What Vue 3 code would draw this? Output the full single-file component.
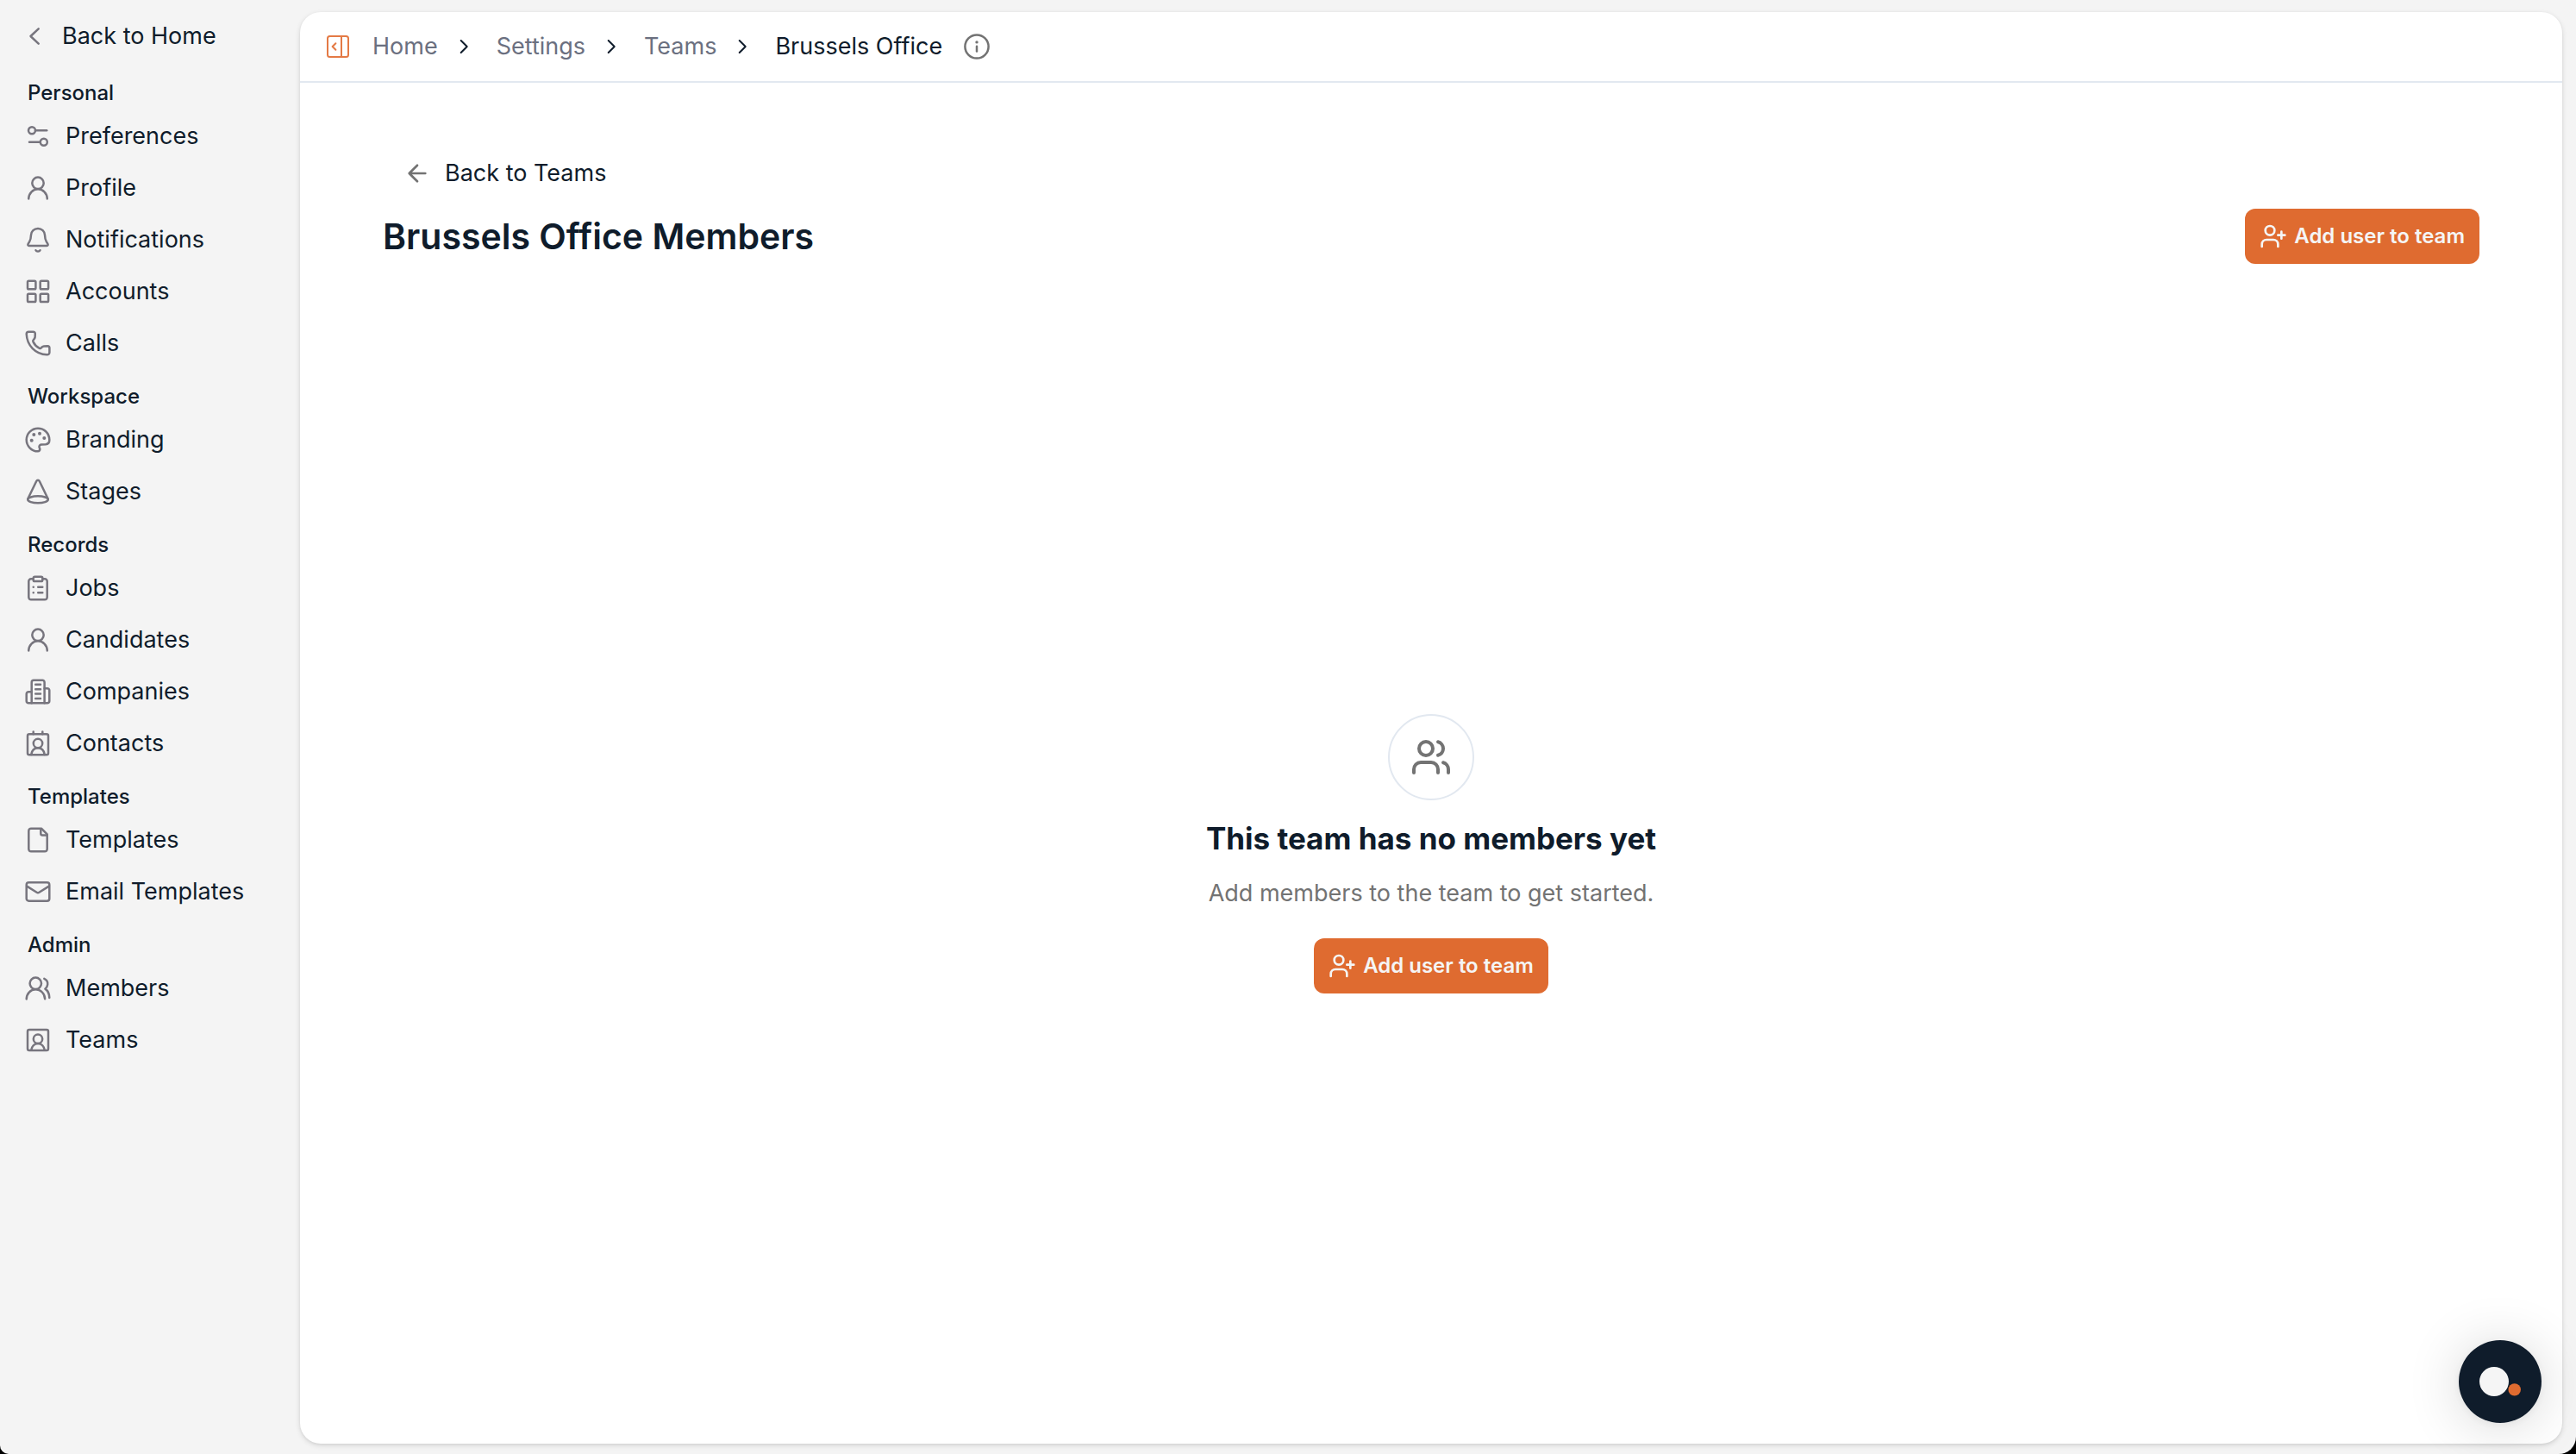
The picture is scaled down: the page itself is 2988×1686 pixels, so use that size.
<script setup>
import { h } from 'vue'

const person = '<circle cx="16" cy="10.3" r="6.7"/><path d="M5.2 28.4C5.4 22.2 10 17.3 16 17.3S26.6 22.2 26.8 28.4"/>'

const icons = {
  sliders: '<circle cx="9" cy="9.3" r="4"/><path d="M13.2 9.3H26.2"/><circle cx="22.8" cy="22.7" r="4"/><path d="M18.6 22.7H6"/>',
  user: person,
  bell: '<path d="M16 2.9C11.5 2.9 8.2 6.2 8 10.5C7.9 13.4 7.6 15.8 6.2 18.2L4.7 20.6C4 21.8 4.4 22.9 5.7 22.9H26.3C27.6 22.9 28 21.8 27.3 20.6L25.8 18.2C24.4 15.8 24.1 13.4 24 10.5C23.8 6.2 20.5 2.9 16 2.9Z"/><path d="M13.5 28.2C14.3 29.9 17.7 29.9 18.5 28.2"/>',
  grid: '<rect x="4" y="3.8" width="9.4" height="9.4" rx="1.3"/><rect x="18.7" y="3.8" width="9.4" height="9.4" rx="1.3"/><rect x="4" y="18.7" width="9.4" height="9.4" rx="1.3"/><rect x="18.7" y="18.7" width="9.4" height="9.4" rx="1.3"/>',
  phone: '<path d="M2.7 5.3A2.6 2.6 0 0 1 5.3 2.7H10.6A2.2 2.2 0 0 1 12.8 5L12.6 9.2C12.5 10.6 11.8 11.2 10.8 12.1C10.1 12.8 10 13.4 10.5 14.4C12.1 17.8 14.6 20.3 17.8 21.8C18.6 22.2 19.3 22 19.8 21.3C20.6 20.2 21.5 19.5 22.8 19.4L27.2 19.2A2.3 2.3 0 0 1 29.4 21.5V26.5C29.4 28.3 28.2 29.4 26.4 29.3C13 28.8 3.3 18.6 2.7 5.3Z"/>',
  palette: '<path d="M16 2.7C8.6 2.7 2.7 8.6 2.7 16C2.7 23 8.5 29.3 15.8 29.3C17.8 29.3 18.7 27.7 18.1 26L17.7 25C17.1 23.2 18.1 21.8 19.9 21.5L25 21.2C28 20.9 29.4 18.6 29.3 16C29.2 8.4 23.4 2.7 16 2.7Z"/><g fill="currentColor" stroke="none"><circle cx="11.3" cy="10" r="2"/><circle cx="18" cy="8.7" r="2"/><circle cx="23.3" cy="14" r="2"/><circle cx="8.7" cy="16.7" r="2"/></g>',
  cone: '<ellipse cx="16" cy="25.3" rx="11.8" ry="4"/><path d="M4.4 24.2L14.2 4C15 2.3 17 2.3 17.8 4L27.6 24.2"/>',
  clipboard: '<path d="M10.7 5.3H8A2.7 2.7 0 0 0 5.3 8V26.6A2.7 2.7 0 0 0 8 29.3H24A2.7 2.7 0 0 0 26.7 26.6V8A2.7 2.7 0 0 0 24 5.3H21.3"/><rect x="10.7" y="2.7" width="10.6" height="5.3" rx="1.6"/><path d="M16.2 14.7H21.3M16.2 21.3H21.3M10.7 14.7H10.8M10.7 21.3H10.8"/>',
  building: '<path d="M8.7 29.3V5.2A2.4 2.4 0 0 1 11.1 2.8H21.2A2.4 2.4 0 0 1 23.6 5.2V29.3"/><path d="M8.7 16.3H5.1A2.4 2.4 0 0 0 2.7 18.7V26.9A2.4 2.4 0 0 0 5.1 29.3H26.9A2.4 2.4 0 0 0 29.3 26.9V14.6A2.4 2.4 0 0 0 26.9 12.2H23.6"/><path d="M13.2 7.8H19M13.2 13.2H19M13.2 18.6H19M13.2 24H19"/>',
  contact: '<rect x="4" y="5.3" width="24" height="24" rx="2"/><path d="M10.7 2.4V5.3M21.3 2.4V5.3"/><circle cx="16" cy="16" r="5.2"/><path d="M8.2 29C9 24.4 12 21.3 16 21.3S23 24.4 23.8 29"/>',
  file: '<path d="M20 2.7H8A2.7 2.7 0 0 0 5.3 5.4V26.6A2.7 2.7 0 0 0 8 29.3H24A2.7 2.7 0 0 0 26.7 26.6V9.4Z"/><path d="M19.3 3.2V8.4A2 2 0 0 0 21.3 10.4H26.3"/>',
  mail: '<rect x="2.7" y="5.3" width="26.6" height="21.4" rx="2.7"/><path d="M3.2 9.6L14.6 16.8Q16 17.7 17.4 16.8L28.8 9.6"/>',
  members: '<circle cx="13.3" cy="10.3" r="6.7"/><path d="M2.7 28.4C2.9 22.2 7.3 17.3 13.3 17.3S23.9 22.2 24.1 28.2"/><path d="M23.3 4.8C26 6 27.6 8.6 27.2 11.6C27 13.6 26 15.2 24.4 16.6C27.4 18.6 29.2 22 29.3 26.9"/>',
  teams: '<rect x="4" y="4" width="24" height="24" rx="2"/><circle cx="16" cy="14.7" r="5.2"/><path d="M8.2 27.8C9 23.2 12 20 16 20S23 23.2 23.8 27.8"/>',
}

const sections = [
  { title: 'Personal', items: [['Preferences', 'sliders'], ['Profile', 'user'], ['Notifications', 'bell'], ['Accounts', 'grid'], ['Calls', 'phone']] },
  { title: 'Workspace', items: [['Branding', 'palette'], ['Stages', 'cone']] },
  { title: 'Records', items: [['Jobs', 'clipboard'], ['Candidates', 'user'], ['Companies', 'building'], ['Contacts', 'contact']] },
  { title: 'Templates', items: [['Templates', 'file'], ['Email Templates', 'mail']] },
  { title: 'Admin', items: [['Members', 'members'], ['Teams', 'teams']] },
]

const crumbs = ['Home', 'Settings', 'Teams']

const UserPlus = () =>
  h('svg', {
    width: 32, height: 32, viewBox: '0 0 24 24', fill: 'none', stroke: 'currentColor',
    'stroke-width': 2, 'stroke-linecap': 'round', 'stroke-linejoin': 'round', 'aria-hidden': 'true',
  }, [
    h('path', { d: 'M16 21v-2a4 4 0 0 0-4-4H6a4 4 0 0 0-4 4v2' }),
    h('circle', { cx: 9, cy: 7, r: 4 }),
    h('path', { d: 'M19 8v6M22 11h-6' }),
  ])
</script>

<template>
  <div class="app">
    <aside class="sidebar">
      <a class="back-home" href="#">
        <svg class="icon" width="32" height="32" viewBox="0 0 32 32"><path d="M20.7 7.3L11.5 16L20.7 24.7" /></svg>
        <span>Back to Home</span>
      </a>
      <nav aria-label="Settings">
        <section v-for="section in sections" :key="section.title">
          <h2 class="section-title">{{ section.title }}</h2>
          <a v-for="[label, icon] in section.items" :key="label" class="nav-item" href="#">
            <svg class="icon" width="32" height="32" viewBox="0 0 32 32" v-html="icons[icon]" />
            <span>{{ label }}</span>
          </a>
        </section>
      </nav>
    </aside>

    <main class="panel">
      <header class="topbar">
        <button class="icon-button toggle" type="button" aria-label="Toggle sidebar">
          <svg width="28" height="28" viewBox="0 0 28 28">
            <rect x="2" y="2" width="24" height="24" rx="2.5" />
            <path d="M18 2V26M11.4 10.2L7.6 14L11.4 17.8" />
          </svg>
        </button>
        <nav class="crumbs" aria-label="Breadcrumb">
          <template v-for="crumb in crumbs" :key="crumb">
            <a href="#">{{ crumb }}</a>
            <svg class="chevron" width="24" height="24" viewBox="0 0 24 24"><path d="M8.7 5L15.7 12L8.7 19" /></svg>
          </template>
          <span class="current">Brussels Office</span>
        </nav>
        <button class="icon-button info" type="button" aria-label="Information">
          <svg width="32" height="32" viewBox="0 0 32 32">
            <circle cx="16" cy="16" r="13.6" />
            <path d="M16 15.8V21.4" />
            <circle class="dot" cx="16" cy="10.9" r="1.7" />
          </svg>
        </button>
      </header>

      <div class="content">
        <a class="back-teams" href="#">
          <svg width="32" height="32" viewBox="0 0 32 32"><path d="M25.3 16H6.8M16 6.7L6.7 16L16 25.3" /></svg>
          <span>Back to Teams</span>
        </a>
        <div class="heading">
          <h1>Brussels Office Members</h1>
          <button class="primary" type="button"><UserPlus />Add user to team</button>
        </div>
        <div class="empty">
          <div class="badge">
            <svg width="48" height="48" viewBox="0 0 24 24">
              <path d="M16 21v-2a4 4 0 0 0-4-4H6a4 4 0 0 0-4 4v2" />
              <circle cx="9" cy="7" r="4" />
              <path d="M22 21v-2a4 4 0 0 0-3-3.87M16 3.13a4 4 0 0 1 0 7.75" />
            </svg>
          </div>
          <h2>This team has no members yet</h2>
          <p>Add members to the team to get started.</p>
          <button class="primary" type="button"><UserPlus />Add user to team</button>
        </div>
      </div>
    </main>

    <button class="chat" type="button" aria-label="Open chat">
      <svg width="96" height="96" viewBox="0 0 96 96">
        <circle cx="41" cy="48" r="17" fill="#f5f5f5" />
        <circle cx="64.7" cy="57.4" r="7.2" fill="#df6b30" />
      </svg>
    </button>
  </div>
</template>

<style>
body {
  margin: 0;
  background: #000;
}
</style>

<style scoped>
.app {
  box-sizing: border-box;
  display: flex;
  min-height: 100vh;
  padding: 14px 16px 12px 0;
  border-radius: 0 0 20px 10px;
  background: #f4f4f4;
  color: #0f1c2b;
  font-family: Inter, "Liberation Sans", sans-serif;
  font-size: 27px;
  line-height: 40px;
}

a {
  color: inherit;
  text-decoration: none;
}

h1,
h2,
p {
  margin: 0;
}

button {
  padding: 0;
  border: 0;
  background: none;
  color: inherit;
  font: inherit;
  cursor: pointer;
}

svg {
  display: block;
  flex: none;
  fill: none;
  stroke: currentColor;
  stroke-linecap: round;
  stroke-linejoin: round;
}

.sidebar {
  flex: none;
  width: 348px;
}

.icon {
  color: #77757e;
  stroke-width: 2.5;
}

.back-home {
  display: flex;
  align-items: center;
  gap: 16px;
  height: 56px;
  padding-left: 24px;
  margin-bottom: 6px;
}

.section-title {
  box-sizing: border-box;
  height: 52px;
  padding: 16px 32px 4px;
  font-size: 24px;
  font-weight: 500;
  line-height: 32px;
}

.nav-item {
  display: flex;
  align-items: center;
  gap: 16px;
  height: 60px;
  padding-left: 28px;
}

.panel {
  display: flex;
  flex: 1;
  flex-direction: column;
  min-width: 0;
  border-radius: 24px;
  background: #fff;
  box-shadow: 0 2px 6px rgba(0, 0, 0, 0.12), 0 1px 3px rgba(0, 0, 0, 0.06);
}

.topbar {
  display: flex;
  align-items: center;
  height: 80px;
  padding: 0 30px;
  border-bottom: 2px solid #e2e8f0;
}

.toggle {
  margin-right: 26px;
  color: #e47a45;
}

.toggle svg {
  stroke-width: 2;
}

.crumbs {
  display: flex;
  align-items: center;
  color: #6b7080;
}

.crumbs a {
  margin-right: 18px;
}

.chevron {
  margin-right: 26px;
  color: #0f1c2b;
  stroke-width: 2;
}

.current {
  color: #0f1c2b;
}

.info {
  margin-left: 24px;
  color: #737373;
}

.info svg {
  stroke-width: 2.5;
}

.dot {
  fill: currentColor;
  stroke: none;
}

.content {
  display: flex;
  flex: 1;
  flex-direction: column;
  padding: 80px 96px 0;
}

.back-teams {
  display: flex;
  align-items: center;
  align-self: flex-start;
  gap: 16px;
  height: 50px;
  padding-left: 24px;
}

.back-teams svg {
  color: #737373;
  stroke-width: 2.7;
}

.heading {
  display: flex;
  align-items: center;
  justify-content: space-between;
  height: 64px;
  margin-top: 16px;
}

h1 {
  font-size: 41px;
  font-weight: 600;
  line-height: 56px;
}

.primary {
  display: flex;
  align-items: center;
  gap: 8px;
  height: 64px;
  padding: 0 17px;
  border-radius: 12px;
  background: #df6b30;
  color: #f5f5f5;
  font-size: 24px;
  font-weight: 600;
  line-height: 32px;
}

.empty {
  display: flex;
  flex: 1;
  flex-direction: column;
  align-items: center;
  justify-content: center;
}

.badge {
  display: flex;
  align-items: center;
  justify-content: center;
  box-sizing: border-box;
  width: 100px;
  height: 100px;
  border: 2px solid #e2e8f0;
  border-radius: 50%;
  color: #737373;
}

.badge svg {
  stroke-width: 2;
}

.empty h2 {
  margin-top: 16px;
  font-size: 35px;
  font-weight: 700;
  line-height: 56px;
}

.empty p {
  margin: 16px 0 32px;
  color: #737373;
}

.chat {
  position: fixed;
  right: 40px;
  bottom: 36px;
  width: 96px;
  height: 96px;
  border-radius: 50%;
  background: #0f1c2b;
  box-shadow: 0 2px 12px rgba(0, 0, 0, 0.06), 0 4px 64px rgba(0, 0, 0, 0.16);
}

.chat svg {
  stroke: none;
}
</style>
